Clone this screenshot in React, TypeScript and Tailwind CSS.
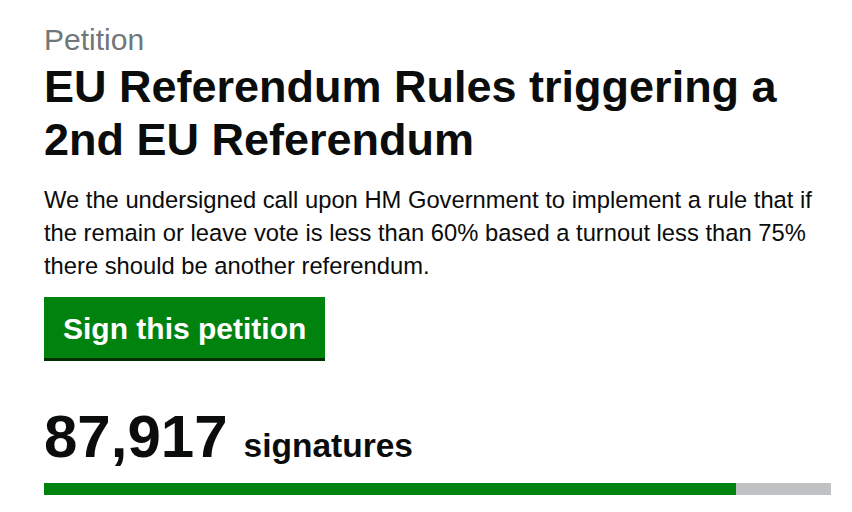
import React from "react";

const signatures = 87917;
const target = 100000;

const App = () => {
  const pct = Math.min(100, (signatures / target) * 100);

  return (
    <div className="min-h-[512px] bg-white font-['Liberation_Sans',Arial,sans-serif] text-[#0b0c0c]">
      <div className="w-[787px] ml-[44px] pt-[22px]">
        <span className="block text-[30px] leading-[36px] text-[#6f777b]">
          Petition
        </span>
        <h1 className="text-[45px] leading-[53px] font-bold mt-[2px]">
          EU Referendum Rules triggering a 2nd EU Referendum
        </h1>

        <p className="text-[23.75px] leading-[33px] mt-[17px]">
          We the undersigned call upon HM Government to implement a rule that
          if the remain or leave vote is less than 60% based a turnout less
          than 75% there should be another referendum.
        </p>

        <button
          type="button"
          className="mt-[15px] bg-[#00820f] text-white text-[30px] leading-[36px] font-bold px-[19px] pt-[14px] pb-[11px] shadow-[0_3px_0_#003000]"
        >
          Sign this petition
        </button>

        <div className="mt-[46px] flex items-baseline">
          <span className="text-[60px] leading-[66px] font-bold">
            {signatures.toLocaleString("en-GB")}
          </span>
          <span className="text-[33.5px] font-bold ml-[16px]">signatures</span>
        </div>

        <div className="mt-[12px] h-[12px] bg-[#bfc1c3]">
          <div className="h-full bg-[#00820f]" style={{ width: `${pct}%` }} />
        </div>
      </div>
    </div>
  );
};

export default App;
